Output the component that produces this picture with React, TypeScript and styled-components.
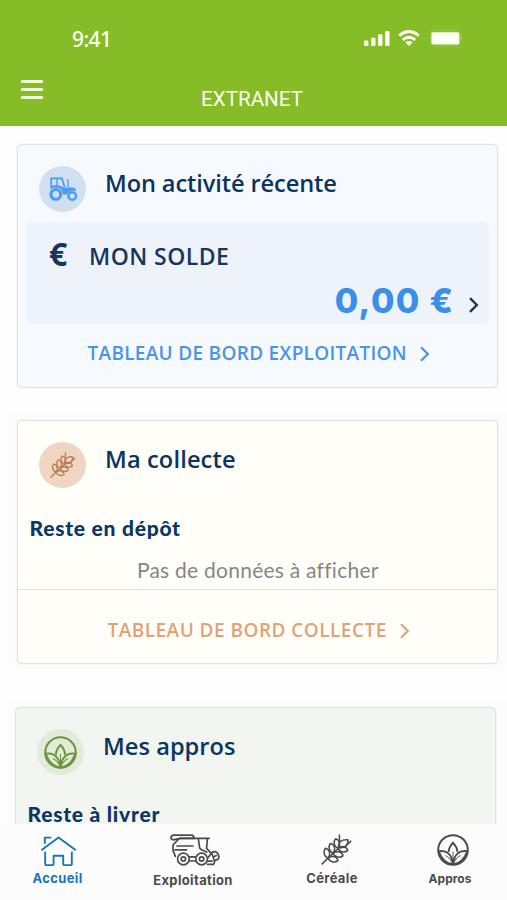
import React from 'react';
import styled, { createGlobalStyle } from 'styled-components';

const GlobalStyle = createGlobalStyle`
  * { box-sizing: border-box; }
  body { margin: 0; background: #fefefe; font-family: "Open Sans", "Noto Sans", sans-serif; }
`;

const Screen = styled.div`
  display: flex;
  flex-direction: column;
  width: 507px;
  height: 900px;
  overflow: hidden;
  background: #fefefe;
`;

const Header = styled.header`
  flex: none;
  height: 126px;
  background: #85bc27;
  color: #fdfff2;
`;

const StatusBar = styled.div`
  display: flex;
  align-items: center;
  justify-content: space-between;
  height: 77px;
  padding: 0 45px 0 72px;
`;

const Clock = styled.span`
  font: 500 21px/28px "Noto Sans", sans-serif;
  letter-spacing: -0.6px;
`;

const StatusIcons = styled.svg`
  display: block;
  width: 102px;
  height: 20px;
`;

const TitleBar = styled.div`
  display: grid;
  grid-template-columns: 44px 1fr 44px;
`;

const MenuButton = styled.button`
  display: flex;
  flex-direction: column;
  gap: 5px;
  width: 22px;
  margin: 3px 0 0 21px;
  padding: 0;
  border: 0;
  background: none;

  span {
    height: 3px;
    border-radius: 1px;
    background: #f1fbd8;
  }
`;

const PageTitle = styled.h1`
  margin: 8px 0 0 -3px;
  text-align: center;
  font: 400 20.6px/28px "Roboto", sans-serif;
`;

const Content = styled.main`
  flex: 1;
  min-height: 0;
  overflow: hidden;
  padding-top: 18px;
`;

const Section = styled.section<{ $top: number; $left: number; $right: number; $tint?: boolean }>`
  margin: ${p => p.$top}px 0 0 8px;
  padding: ${p => (p.$tint ? '8px' : '0')} ${p => p.$right}px ${p => (p.$tint ? '6px' : '0')} ${p => p.$left}px;
  background: ${p => (p.$tint ? '#fcfcfc' : 'transparent')};
`;

const Card = styled.article<{ $bg: string; $height: number }>`
  height: ${p => p.$height}px;
  border: 1.5px solid #dfe3e3;
  border-radius: 5px;
  background: ${p => p.$bg};
  box-shadow: 0 0 2px rgba(0, 0, 0, 0.1);
`;

const CardHeader = styled.div`
  display: flex;
  align-items: flex-start;
  gap: 19px;
  padding: 21px 21px 0;
`;

const Badge = styled.div<{ $bg: string }>`
  display: grid;
  place-items: center;
  flex: none;
  width: 47px;
  height: 46px;
  border-radius: 50%;
  background: ${p => p.$bg};
`;

const CardTitle = styled.h2<{ $spacing: number }>`
  margin: 0;
  color: #0a3561;
  font: 600 23.6px/34px "Open Sans", sans-serif;
  letter-spacing: ${p => p.$spacing}px;
  white-space: nowrap;
`;

const Balance = styled.div`
  height: 102px;
  margin: 10px 8px 0 9px;
  padding: 16px 10px 0 22px;
  border-radius: 5px;
  background: #eef3fa;
  color: #17365f;
`;

const BalanceLabel = styled.div`
  display: flex;
  align-items: center;
  height: 36px;
  font: 600 23px/34px "Open Sans", sans-serif;
  letter-spacing: 0.45px;

  b {
    width: 40px;
    margin-top: -4px;
    font: 700 32px/34px "Open Sans", sans-serif;
  }
`;

const BalanceAmount = styled.div`
  display: flex;
  align-items: center;
  justify-content: flex-end;
  gap: 13px;
  height: 44px;
  margin-top: 5px;

  strong {
    color: #3b8fe9;
    font: 800 34px/44px "Inter", sans-serif;
    letter-spacing: 1.4px;
  }

  svg {
    margin-top: 8px;
  }
`;

const CardLink = styled.a<{ $color: string; $left: number; $top: number; $spacing: number }>`
  display: flex;
  align-items: center;
  gap: 12px;
  padding: ${p => p.$top}px 0 0 ${p => p.$left}px;
  color: ${p => p.$color};
  font: 600 19px/26px "Open Sans", sans-serif;
  letter-spacing: ${p => p.$spacing}px;
  white-space: nowrap;

  svg {
    margin-top: 2px;
  }
`;

const SubTitle = styled.h3<{ $top: number }>`
  margin: ${p => p.$top}px 0 0 11.5px;
  color: #0b3765;
  font: 900 21px/28px "Lato", sans-serif;
  letter-spacing: 0.75px;
`;

const EmptyNote = styled.p`
  height: 48px;
  margin: 0;
  padding: 14px 0 0 1px;
  border-bottom: 1.5px solid #dfe2e0;
  color: #868686;
  text-align: center;
  font: 400 21px/28px "Lato", sans-serif;
  letter-spacing: 0.25px;
`;

const Nav = styled.nav`
  display: grid;
  grid-template-columns: 115px 156px 122px 114px;
  flex: none;
  height: 76px;
  background: #fcfcfc;
`;

const NavItem = styled.a<{ $active?: boolean; $size: number; $spacing: number; $drop: number; $shift: number }>`
  display: flex;
  flex-direction: column;
  align-items: center;
  gap: ${p => p.$drop}px;
  padding-top: 10px;
  color: ${p => (p.$active ? '#1a76ba' : '#4b4b4b')};
  font: 700 ${p => p.$size}px/18px "Inter", sans-serif;
  letter-spacing: ${p => p.$spacing}px;

  svg {
    display: block;
    flex: none;
    margin-left: ${p => p.$shift}px;
  }
`;

const Chevron = ({ width = 2.2 }: { width?: number }) => (
  <svg width="11" height="16" viewBox="0 0 11 16" fill="none" stroke="currentColor" strokeWidth={width}>
    <path d="M2 1.2 L8.8 8 L2 14.8" />
  </svg>
);

const SignalIcons = () => (
  <StatusIcons viewBox="0 0 102 20" fill="#fdfff2">
    <rect x="4" y="11.5" width="4.4" height="5.5" rx="1.2" />
    <rect x="11.1" y="8.8" width="4.4" height="8.2" rx="1.2" />
    <rect x="18.1" y="5.2" width="4.4" height="11.8" rx="1.2" />
    <rect x="25.1" y="2" width="4.4" height="15" rx="1.2" />
    <g fill="none" stroke="#fdfff2" strokeWidth="2.9">
      <path d="M39.2 6.6 Q49 -1.6 58.8 6.6" />
      <path d="M42.8 10.8 Q49 5.6 55.2 10.8" />
    </g>
    <path d="M45.4 13.2 Q49 10.6 52.6 13.2 L49 17 Z" />
    <rect x="70.2" y="1.6" width="30.6" height="15.6" rx="3" fill="none" stroke="#98c84a" strokeWidth="0.8" />
    <rect x="71.4" y="3.2" width="28" height="12.2" rx="1.6" />
    <rect x="101.2" y="7.5" width="0.8" height="3.6" fill="#b5d77c" />
  </StatusIcons>
);

const Tractor = () => (
  <svg width="30" height="26" viewBox="0 0 30 26" fill="none" stroke="#499bf6" strokeWidth="1.7">
    <path d="M3.2 11 V2.3 H14 L16.5 11" />
    <path d="M9 2.3 V9" strokeWidth="1.3" />
    <path d="M20 11 V4.5 L19 3.4" strokeWidth="1.3" />
    <path d="M2.5 10.4 Q10 7 15.5 11.5 H25 Q28 12 28.2 15.5 Q23 12.5 18.6 18.6 H14.8 Q14.5 11.8 7.6 11.6 Q4.5 11.5 2.5 13.5 Z" fill="#499bf6" stroke="none" />
    <circle cx="7.8" cy="18.4" r="4.9" strokeWidth="3" />
    <circle cx="24.2" cy="20" r="3.8" strokeWidth="2.4" />
  </svg>
);

const Wheat = ({ size, color, stroke }: { size: number; color: string; stroke: number }) => (
  <svg width={size} height={size} viewBox="0 0 31 31" fill="none" stroke={color} strokeWidth={stroke} strokeLinejoin="round">
    <path d="M0.6 30.4 L19.5 12.2 M24.8 12 L30.2 6.9 M18.4 7 V0.6" />
    <path d="M7.2 24 C2.6 22.6 2 16.8 4.6 14.2 C9 15.6 9.8 20.6 7.2 24 Z" />
    <path d="M12.2 19.2 C7.6 17.8 7 12 9.6 9.4 C14 10.8 14.8 15.8 12.2 19.2 Z" />
    <path d="M17.2 14.2 C12.6 12.8 12 7.4 14.6 4.8 C19 6.2 19.8 10.8 17.2 14.2 Z" />
    <path d="M7.2 24 C8.8 28.6 14.4 29 17 26.4 C15.4 22 10.8 21.4 7.2 24 Z" />
    <path d="M12.2 19.2 C13.8 23.8 19.4 24.2 22 21.6 C20.4 17.2 15.8 16.6 12.2 19.2 Z" />
    <path d="M17.2 14.2 C18.8 18.8 24.2 19 26.8 16.4 C25.2 12 20.8 11.6 17.2 14.2 Z" />
    <path d="M17.8 13.4 C16.6 8 20.8 5.2 27 5.8 C27.4 11 23.6 14.8 17.8 13.4 Z" />
  </svg>
);

const Leaves = ({ size, color, stroke = 2 }: { size: number; color: string; stroke?: number }) => (
  <svg width={size} height={size} viewBox="0 0 32 32" fill="none" stroke={color} strokeWidth={stroke} strokeLinejoin="round">
    <circle cx="16" cy="16" r="14.8" />
    <path d="M11.5 18 C11.8 13.8 13.8 11 16 8.6 C18.2 11 20.2 13.8 20.5 18" />
    <path d="M1.6 17.2 C9.8 15.8 15.2 20.6 15.8 30.4 C9.2 29.8 4.4 24.8 1.6 17.2 Z" />
    <path d="M30.4 17.2 C22.2 15.8 16.8 20.6 16.2 30.4 C22.8 29.8 27.6 24.8 30.4 17.2 Z" />
    <path d="M8.5 21.6 C11.8 23.2 14 25.8 16 30 C18 25.8 20.2 23.2 23.5 21.6 M16 17.5 V28" strokeWidth={stroke * 0.5} />
  </svg>
);

const House = () => (
  <svg width="37" height="32" viewBox="0 0 37 32" fill="none" stroke="currentColor" strokeWidth="1.9" strokeLinejoin="round" strokeLinecap="round">
    <path d="M2 15.8 L18.5 3.4 L35.2 15.8" />
    <path d="M4.8 9 V3.6 H10.5" />
    <path d="M5.2 18.5 V30 Q5.2 31.2 6.4 31.2 H12.2 Q13.6 31.2 13.6 30 V21.8 H23.2 V30 Q23.2 31.2 24.6 31.2 H30.6 Q31.8 31.2 31.8 30 V18.5" />
  </svg>
);

const Harvester = () => (
  <svg width="50" height="32" viewBox="0 0 50 32" fill="none" stroke="currentColor" strokeWidth="1.7" strokeLinejoin="round" strokeLinecap="round">
    <path d="M1 3.6 Q1.4 1.2 3.6 1.2 H21.5 Q24 1.4 24 4.4 H10 L3.4 5.8 Q1 5.6 1 3.6 Z" />
    <path d="M10 4.4 H39" strokeWidth="1.9" />
    <path d="M8.6 5.2 L3 11 V16.4 L5.4 22.4" />
    <path d="M28.4 5 L29.6 13.6 Q29.8 15 31.4 15.6 L36.8 18.2" />
    <path d="M37.4 5 L36.6 14.2 M36.6 14.2 L40.4 18.6" />
    <path d="M7 12 H23 M5 15.8 H16.5 M19.6 22.8 H25.2 M19.4 27 H25.4" />
    <circle cx="13.4" cy="25" r="5.8" />
    <circle cx="13.4" cy="25" r="2.2" />
    <circle cx="31.6" cy="25" r="5.8" />
    <circle cx="31.6" cy="25" r="2.2" />
    <path d="M38.2 23.5 L41.6 18.8 Q44.6 16.6 47.2 18.8 Q50.4 22 47.8 25.4 L44.8 26.4 M41.6 18.8 Q43 22.5 43.8 25 Q45.4 28.4 43.4 30.4 H37.6 M38 27.2 H42 M44.4 22.6 L46.4 21.6" />
  </svg>
);

export default function App() {
  return (
    <Screen>
      <GlobalStyle />
      <Header>
        <StatusBar>
          <Clock>9:41</Clock>
          <SignalIcons />
        </StatusBar>
        <TitleBar>
          <MenuButton aria-label="Menu">
            <span />
            <span />
            <span />
          </MenuButton>
          <PageTitle>EXTRANET</PageTitle>
        </TitleBar>
      </Header>

      <Content>
        <Section $top={0} $left={9} $right={9.5}>
          <Card $bg="#f6fafe" $height={244}>
            <CardHeader>
              <Badge $bg="#d0e0f0"><Tractor /></Badge>
              <CardTitle $spacing={-0.1}>Mon activité récente</CardTitle>
            </CardHeader>
            <Balance>
              <BalanceLabel><b>€</b>MON SOLDE</BalanceLabel>
              <BalanceAmount>
                <strong>0,00 €</strong>
                <Chevron width={2.4} />
              </BalanceAmount>
            </Balance>
            <CardLink $color="#4a94e8" $left={69.5} $top={16} $spacing={0.3}>
              TABLEAU DE BORD EXPLOITATION <Chevron />
            </CardLink>
          </Card>
        </Section>

        <Section $top={24} $left={9} $right={9.5} $tint>
          <Card $bg="#fffef9" $height={244}>
            <CardHeader>
              <Badge $bg="#f0d6c2"><Wheat size={26} color="#bb7a4d" stroke={1.6} /></Badge>
              <CardTitle $spacing={0.15}>Ma collecte</CardTitle>
            </CardHeader>
            <SubTitle $top={26}>Reste en dépôt</SubTitle>
            <EmptyNote>Pas de données à afficher</EmptyNote>
            <CardLink $color="#dda477" $left={89.5} $top={27} $spacing={0.47}>
              TABLEAU DE BORD COLLECTE <Chevron />
            </CardLink>
          </Card>
        </Section>

        <Section $top={29} $left={7} $right={11} $tint>
          <Card $bg="#f2f5f0" $height={244}>
            <CardHeader>
              <Badge $bg="#e1eadc"><Leaves size={33} color="#6d9638" stroke={2} /></Badge>
              <CardTitle $spacing={0.05}>Mes appros</CardTitle>
            </CardHeader>
            <SubTitle $top={25}>Reste à livrer</SubTitle>
          </Card>
        </Section>
      </Content>

      <Nav>
        <NavItem $active $size={13} $spacing={0.35} $drop={3} $shift={1}><House />Accueil</NavItem>
        <NavItem $size={13} $spacing={0.35} $drop={5} $shift={4}><Harvester />Exploitation</NavItem>
        <NavItem $size={13} $spacing={0.35} $drop={4} $shift={8}><Wheat size={31} color="#4b4b4b" stroke={1.5} />Céréale</NavItem>
        <NavItem $size={12} $spacing={0} $drop={4} $shift={5}><Leaves size={32} color="#4b4b4b" stroke={1.9} />Appros</NavItem>
      </Nav>
    </Screen>
  );
}
